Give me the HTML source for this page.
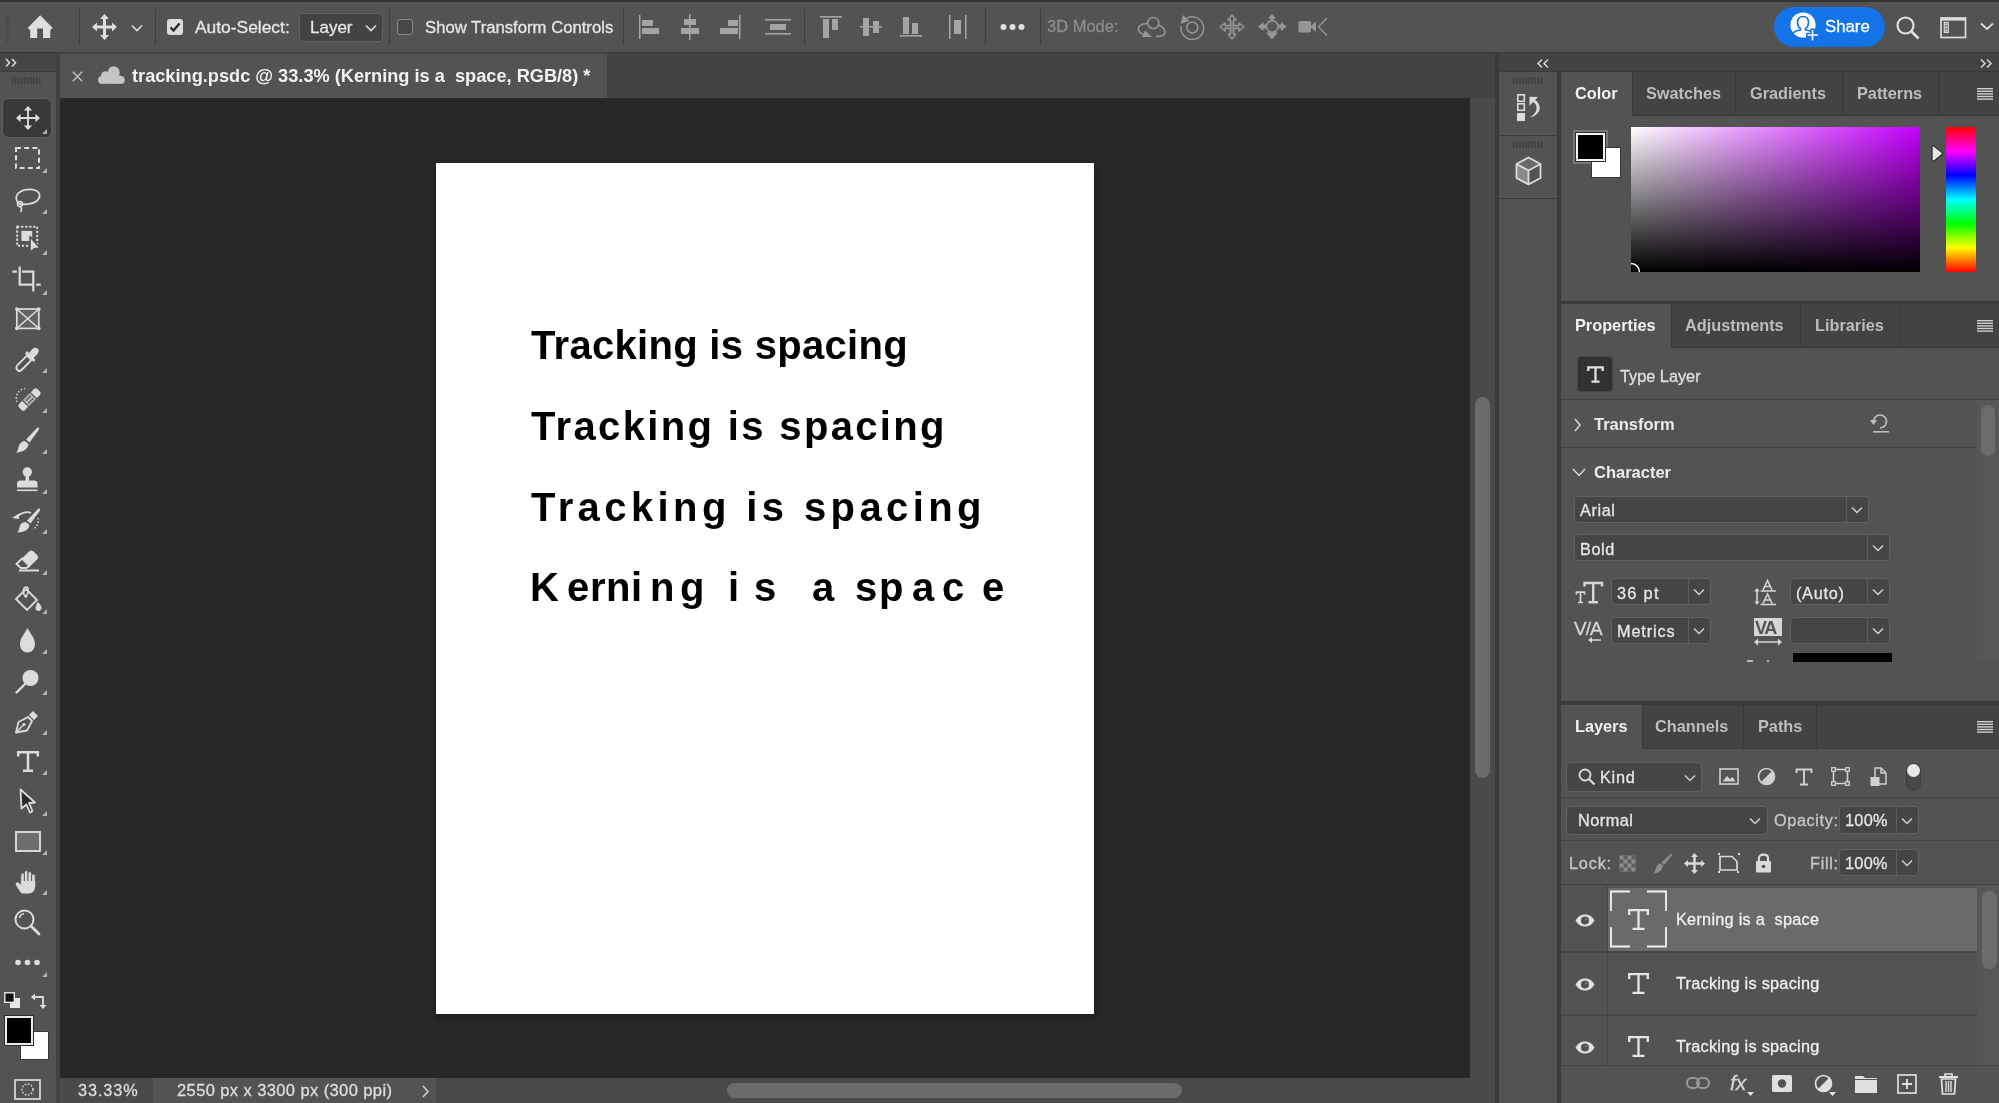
<!DOCTYPE html>
<html><head><meta charset="utf-8">
<style>
*{margin:0;padding:0;box-sizing:border-box}
html,body{width:1999px;height:1103px;overflow:hidden;background:#535353;font-family:"Liberation Sans",sans-serif;color:#e8e8e8}
.a{position:absolute}
.t{position:absolute;white-space:pre;line-height:1;will-change:transform}
.t{-webkit-text-stroke:0.3px}
.t[style*="font-weight:bold"]{-webkit-text-stroke:0}
#ct .t{-webkit-text-stroke:0}
.sep{position:absolute;width:1px;background:#3d3d3d}
.dd{position:absolute;background:#454545;border:1px solid #626262;border-radius:4px}
.ddsep{position:absolute;top:0;bottom:0;width:1px;background:#5a5a5a}
svg{position:absolute;overflow:visible}
</style></head><body>

<!-- TOP OPTIONS BAR -->
<div class="a" style="left:0;top:0;width:1999px;height:1.5px;background:#323232"></div>
<div class="a" style="left:0;top:2px;width:1999px;height:50px;background:#535353"></div>
<div class="a" style="left:0;top:52px;width:1999px;height:1px;background:#3a3a3a"></div>


<!-- TOPBAR CONTENT -->
<svg style="left:5.5px;top:12.5px" width="4" height="30"><g fill="#444"><rect x="0" y="0.0" width="3.2" height="1.3"/><rect x="0" y="3.1" width="3.2" height="1.3"/><rect x="0" y="6.2" width="3.2" height="1.3"/><rect x="0" y="9.3" width="3.2" height="1.3"/><rect x="0" y="12.4" width="3.2" height="1.3"/><rect x="0" y="15.5" width="3.2" height="1.3"/><rect x="0" y="18.6" width="3.2" height="1.3"/><rect x="0" y="21.7" width="3.2" height="1.3"/><rect x="0" y="24.8" width="3.2" height="1.3"/><rect x="0" y="27.9" width="3.2" height="1.3"/></g></svg>
<svg style="left:27px;top:15px" width="27" height="24" viewBox="0 0 27 24"><path d="M13.2 0.3 L25.8 13 L23.3 15 L23.3 23 L16 23 L16 13.5 L10.2 13.5 L10.2 23 L3.2 23 L3.2 15 L0.6 13 Z" fill="#dedede"/></svg>
<div class="sep" style="left:79px;top:9px;height:36px"></div>
<svg style="left:92px;top:14px" width="25" height="26" viewBox="0 0 25 26"><g fill="#dedede"><path d="M12.5 0 L17 5 L14 5 L14 11.5 L20 11.5 L20 8.5 L25 13 L20 17.5 L20 14.5 L14 14.5 L14 21 L17 21 L12.5 26 L8 21 L11 21 L11 14.5 L5 14.5 L5 17.5 L0 13 L5 8.5 L5 11.5 L11 11.5 L11 5 L8 5 Z"/></g></svg>
<svg style="left:131px;top:24px" width="12" height="8"><path d="M1 1.5 L6 6.5 L11 1.5" stroke="#dcdcdc" stroke-width="1.6" fill="none"/></svg>
<div class="sep" style="left:155px;top:9px;height:36px"></div>
<div class="a" style="left:167px;top:19px;width:16px;height:16px;background:#dcdcdc;border-radius:3px"></div>
<svg style="left:167px;top:19px" width="16" height="16"><path d="M3.5 8.5 L6.5 11.5 L12.5 4.5" stroke="#2a2a2a" stroke-width="2.4" fill="none"/></svg>
<div class="t" style="left:195px;top:19px;font-size:17.4px;color:#e6e6e6">Auto-Select:</div>
<div class="dd" style="left:299px;top:13px;width:84px;height:29px;background:#434343;border-color:#616161"></div>
<div class="t" style="left:310px;top:19px;font-size:17px;color:#e6e6e6">Layer</div>
<svg style="left:365px;top:24px" width="12" height="8"><path d="M1 1.5 L6 6.5 L11 1.5" stroke="#dcdcdc" stroke-width="1.6" fill="none"/></svg>
<div class="sep" style="left:389px;top:9px;height:36px"></div>
<div class="a" style="left:397px;top:19px;width:16px;height:16px;background:#474747;border:1.5px solid #8a8a8a;border-radius:3px"></div>
<div class="t" style="left:425px;top:20px;font-size:16.7px;color:#e6e6e6">Show Transform Controls</div>
<div class="sep" style="left:623px;top:9px;height:36px"></div>

<!-- align icons -->
<svg style="left:639px;top:15px" width="22" height="24"><g fill="#a4a4a4"><rect x="0" y="0" width="1.5" height="24"/><rect x="3" y="5" width="11" height="6"/><rect x="3" y="13" width="17" height="6"/></g></svg>
<svg style="left:681px;top:14px" width="20" height="26"><g fill="#a4a4a4"><rect x="8" y="0" width="1.5" height="26"/><rect x="3" y="5" width="12" height="6"/><rect x="0" y="14" width="18" height="6"/></g></svg>
<svg style="left:720px;top:15px" width="22" height="24"><g fill="#a4a4a4"><rect x="19" y="0" width="1.5" height="24"/><rect x="8" y="5" width="10" height="6"/><rect x="0" y="13" width="18" height="6"/></g></svg>
<svg style="left:765px;top:16px" width="26" height="22"><g fill="#a4a4a4"><rect x="0" y="3" width="26" height="1.6"/><rect x="5" y="8" width="16" height="6"/><rect x="0" y="17" width="26" height="1.6"/></g></svg>
<div class="sep" style="left:804px;top:9px;height:36px"></div>
<svg style="left:820px;top:16px" width="23" height="22"><g fill="#a4a4a4"><rect x="0" y="0" width="22" height="1.6"/><rect x="3" y="3" width="6" height="19"/><rect x="12" y="3" width="6" height="11"/></g></svg>
<svg style="left:860px;top:15px" width="23" height="24"><g fill="#a4a4a4"><rect x="0" y="11" width="22" height="1.6"/><rect x="3" y="3" width="6" height="18"/><rect x="13" y="6" width="6" height="12"/></g></svg>
<svg style="left:900px;top:16px" width="23" height="22"><g fill="#a4a4a4"><rect x="0" y="19" width="22" height="1.6"/><rect x="3" y="1" width="6" height="17"/><rect x="12" y="7" width="6" height="11"/></g></svg>
<svg style="left:949px;top:15px" width="19" height="24"><g fill="#a4a4a4"><rect x="0" y="0" width="1.5" height="24"/><rect x="5" y="5" width="7" height="14"/><rect x="16" y="0" width="1.5" height="24"/></g></svg>
<div class="sep" style="left:985px;top:9px;height:36px"></div>
<svg style="left:1000px;top:23px" width="26" height="8"><g fill="#e0e0e0"><circle cx="3.5" cy="4" r="3"/><circle cx="12.5" cy="4" r="3"/><circle cx="21.5" cy="4" r="3"/></g></svg>
<div class="sep" style="left:1040px;top:9px;height:36px"></div>
<div class="t" style="left:1047px;top:18px;font-size:16.5px;color:#8c8c8c">3D Mode:</div>
<!-- 3D icons -->
<svg style="left:1137px;top:16px" width="30" height="23" viewBox="0 0 30 23"><g fill="none" stroke="#969696" stroke-width="1.5"><circle cx="16.3" cy="7" r="5.6"/><path d="M10.8 7.5 C4 7.5 0.5 10.5 1.5 14 C2.5 17 6 18.5 9 19"/><path d="M21.2 9 C26 11 28.5 14 28 17 C27.5 19.5 24 20.5 19 20.5"/></g><path d="M5 21 L15 21 L8 14.5 Z" fill="#969696"/></svg>
<svg style="left:1179px;top:13px" width="27" height="28" viewBox="0 0 27 28"><g fill="none" stroke="#969696" stroke-width="1.5"><path d="M6 6.5 A11.3 11.3 0 1 1 2.2 13"/><circle cx="13.3" cy="14.5" r="5.5"/></g><path d="M1.5 11 L4 2 L10 8 Z" fill="#969696"/></svg>
<svg style="left:1219px;top:14px" width="26" height="26" viewBox="0 0 26 26"><path d="M13 1 L17 6 L14.5 6 L14.5 11.5 L20 11.5 L20 9 L25 13 L20 17 L20 14.5 L14.5 14.5 L14.5 20 L17 20 L13 25 L9 20 L11.5 20 L11.5 14.5 L6 14.5 L6 17 L1 13 L6 9 L6 11.5 L11.5 11.5 L11.5 6 L9 6 Z" fill="none" stroke="#969696" stroke-width="1.5" stroke-linejoin="round"/><path d="M13 6 V20 M6 13 H20" stroke="#969696" stroke-width="0.8"/></svg>
<svg style="left:1258px;top:14px" width="29" height="26" viewBox="0 0 29 26"><g fill="#969696"><path d="M14 0 L18 4.5 L15.5 4.5 L15.5 7.5 L12.5 7.5 L12.5 4.5 L10 4.5 Z"/><path d="M14 25.5 L20 18.5 L16.5 18.5 L16.5 16 L11.5 16 L11.5 18.5 L8 18.5 Z"/><path d="M0 12.5 L5.5 8 L5.5 10.5 L8 10.5 L8 14.5 L5.5 14.5 L5.5 17 Z"/><path d="M28.5 12.5 L23 8 L23 10.5 L20.5 10.5 L20.5 14.5 L23 14.5 L23 17 Z"/></g><circle cx="14.2" cy="12.5" r="5.8" fill="#575757" stroke="#969696" stroke-width="1.6"/></svg>
<svg style="left:1298px;top:17px" width="31" height="21" viewBox="0 0 31 21"><g fill="#969696"><rect x="0.5" y="4" width="12.5" height="11.5" rx="1.5"/><path d="M12 9.75 L18 4.5 L18 15 Z"/></g><path d="M29 1 L20.5 9.75 L29 18.5" fill="none" stroke="#969696" stroke-width="1.4"/></svg>
<!-- share -->
<div class="a" style="left:1774px;top:7px;width:111px;height:40px;background:#1473e6;border-radius:20px"></div>
<svg style="left:1789px;top:11px" width="32" height="31" viewBox="0 0 32 31"><circle cx="14" cy="14" r="12.6" fill="#fff"/><path d="M14 5.5 C18 5.5 19.5 8.5 19.5 11.5 C19.5 14.5 18 16.5 16.5 17.5 L16.5 19 C20 19.5 23.5 21 25 23" fill="none" stroke="#1473e6" stroke-width="1.6"/><path d="M14 5.5 C10 5.5 8.5 8.5 8.5 11.5 C8.5 14.5 10 16.5 11.5 17.5 L11.5 19 C8 19.5 4.5 21 3 23" fill="none" stroke="#1473e6" stroke-width="1.6"/><path d="M17 24 H30 M23.5 17.5 V30.5" stroke="#1473e6" stroke-width="4.5"/><path d="M18.5 24 H29 M23.5 19 V29.5" stroke="#fff" stroke-width="1.6"/></svg>
<div class="t" style="left:1825px;top:18.5px;font-size:16.8px;color:#fff">Share</div>
<svg style="left:1896px;top:16px" width="24" height="24" viewBox="0 0 24 24"><circle cx="9.5" cy="9.5" r="8" fill="none" stroke="#e0e0e0" stroke-width="2.2"/><path d="M15.5 15.5 L22.5 22.5" stroke="#e0e0e0" stroke-width="2.6"/></svg>
<svg style="left:1940px;top:17px" width="27" height="22" viewBox="0 0 27 22"><rect x="1" y="1" width="24.5" height="19.5" fill="none" stroke="#dcdcdc" stroke-width="1.7"/><rect x="1" y="1" width="24.5" height="2.6" fill="#dcdcdc"/><rect x="4.3" y="5.5" width="4" height="10" fill="none" stroke="#dcdcdc" stroke-width="1.2"/><g fill="#dcdcdc"><rect x="5.3" y="6.5" width="2" height="2"/><rect x="5.3" y="9.5" width="2" height="2"/><rect x="5.3" y="12.5" width="2" height="2"/></g></svg>
<svg style="left:1980px;top:22px" width="14" height="9"><path d="M1 1.5 L7 7 L13 1.5" stroke="#dcdcdc" stroke-width="1.8" fill="none"/></svg>

<!-- TAB ROW -->
<div class="a" style="left:56px;top:53px;width:1443px;height:45px;background:#434343"></div>
<div class="a" style="left:60px;top:54px;width:547px;height:44px;background:#535353"></div>


<!-- LEFT TOOLBAR -->
<div class="a" style="left:0;top:53px;width:56px;height:18px;background:#454545"></div>
<div class="a" style="left:0;top:71px;width:56px;height:1px;background:#3a3a3a"></div>
<div class="a" style="left:0;top:72px;width:56px;height:1031px;background:#535353"></div>
<div class="a" style="left:56px;top:53px;width:4px;height:1050px;background:#424242"></div>

<!-- CANVAS -->
<div class="a" style="left:60px;top:98px;width:1410px;height:980px;background:#282828"></div>
<div class="a" style="left:436px;top:163px;width:658px;height:851px;background:#fff;box-shadow:0 3px 6px rgba(0,0,0,.35)"></div>


<!-- CANVAS TEXT -->
<div class="a" id="ct" style="left:0;top:0;font-weight:bold;font-size:40px;color:#000">
<div class="t" id="l1" style="left:530.5px;top:325.3px;letter-spacing:0.3px">Tracking is spacing</div>
<div class="t" id="l2" style="left:530.5px;top:405.6px;letter-spacing:2.35px">Tracking is spacing</div>
<div class="t" id="l3" style="left:530.5px;top:486.5px;letter-spacing:4.4px">Tracking is spacing</div>
<div class="a" id="l4" style="left:0;top:566.5px"><span class="t" style="left:529.5px">K</span><span class="t" style="left:566.7px">e</span><span class="t" style="left:589.5px">r</span><span class="t" style="left:606.1px">n</span><span class="t" style="left:630.5px">i</span><span class="t" style="left:649.7px">n</span><span class="t" style="left:679.7px">g</span><span class="t" style="left:727.9px">i</span><span class="t" style="left:754.1px">s</span><span class="t" style="left:811.5px">a</span><span class="t" style="left:855.3px">s</span><span class="t" style="left:878.5px">p</span><span class="t" style="left:911.9px">a</span><span class="t" style="left:942.3px">c</span><span class="t" style="left:981.6px">e</span></div>
</div>

<!-- V SCROLL -->
<div class="a" style="left:1470px;top:98px;width:25px;height:980px;background:#4a4a4a"></div>
<div class="a" style="left:1475px;top:397px;width:15px;height:381px;background:#6b6b6b;border-radius:8px"></div>

<!-- STATUS BAR -->
<div class="a" style="left:60px;top:1078px;width:1435px;height:25px;background:#4a4a4a"></div>
<div class="a" style="left:153px;top:1078px;width:283px;height:25px;background:#535353"></div>
<div class="a" style="left:727px;top:1083px;width:455px;height:15px;background:#6b6b6b;border-radius:8px"></div>

<!-- RIGHT DOCK -->
<div class="a" style="left:1495px;top:53px;width:4px;height:1050px;background:#3b3b3b"></div>
<div class="a" style="left:1499px;top:53px;width:500px;height:18px;background:#434343"></div>
<div class="a" style="left:1499px;top:71px;width:500px;height:1px;background:#3a3a3a"></div>
<div class="a" style="left:1499px;top:72px;width:58px;height:1031px;background:#535353"></div>
<div class="a" style="left:1557px;top:72px;width:4px;height:1031px;background:#3b3b3b"></div>
<div class="a" style="left:1561px;top:72px;width:438px;height:1031px;background:#535353"></div>

<!-- TAB CONTENT -->
<svg style="left:5px;top:58px" width="13" height="10"><path d="M1 1 L4.5 4.75 L1 8.5 M7 1 L10.5 4.75 L7 8.5" stroke="#d8d8d8" stroke-width="1.6" fill="none"/></svg>
<svg style="left:12px;top:77px" width="32" height="7"><g fill="#3f3f3f"><rect x="0" y="0" width="1.5" height="7"/><rect x="3" y="0" width="1.5" height="7"/><rect x="6" y="0" width="1.5" height="7"/><rect x="9" y="0" width="1.5" height="7"/><rect x="12" y="0" width="1.5" height="7"/><rect x="15" y="0" width="1.5" height="7"/><rect x="18" y="0" width="1.5" height="7"/><rect x="21" y="0" width="1.5" height="7"/><rect x="24" y="0" width="1.5" height="7"/><rect x="27" y="0" width="1.5" height="7"/></g></svg>
<svg style="left:72px;top:70.5px" width="11" height="11"><path d="M0.8 0.8 L10.2 10.2 M10.2 0.8 L0.8 10.2" stroke="#c6c6c6" stroke-width="1.3"/></svg>
<svg style="left:98px;top:66px" width="27" height="18" viewBox="0 0 27 18"><g fill="#c4c4c4"><circle cx="15.7" cy="6.2" r="6"/><circle cx="7.4" cy="9.6" r="4.4"/><circle cx="4" cy="13.9" r="3.9"/><circle cx="22.8" cy="13.9" r="3.9"/><rect x="4" y="9.5" width="18.8" height="8.3"/></g></svg>
<div class="t" style="left:132px;top:67px;font-size:18.2px;font-weight:bold;color:#f2f2f2">tracking.psdc @ 33.3% (Kerning is a  space, RGB/8) *</div>



<!-- TOOL ICONS -->
<div class="a" style="left:3px;top:99px;width:48px;height:38px;background:#393939;box-shadow:0 0 0 1px #5f5f5f;border-radius:5px"></div>
<svg style="left:15.5px;top:106px" width="24" height="24" viewBox="0 0 26 26"><path d="M13 0 L17.5 5 L14 5 L14 12 L21 12 L21 8.5 L26 13 L21 17.5 L21 14 L14 14 L14 21 L17.5 21 L13 26 L8.5 21 L12 21 L12 14 L5 14 L5 17.5 L0 13 L5 8.5 L5 12 L12 12 L12 5 L8.5 5 Z" fill="#dcdcdc"/></svg>
<svg style="left:42px;top:129px" width="5" height="5"><path d="M5 0 L5 5 L0 5 Z" fill="#b4b4b4"/></svg>
<svg style="left:15px;top:147px" width="25" height="22" viewBox="0 0 25 22"><rect x="1" y="1" width="23" height="20" fill="none" stroke="#dcdcdc" stroke-width="2" stroke-dasharray="5 3.2"/></svg>
<svg style="left:42px;top:168px" width="5" height="5"><path d="M5 0 L5 5 L0 5 Z" fill="#b4b4b4"/></svg>
<svg style="left:14px;top:187px" width="27" height="26" viewBox="0 0 27 26"><path d="M6 17 C1 14 1 8 6 5 C11 1.5 21 1.5 24.5 5.5 C27.5 9.5 24 15 17 16.5 C13 17.5 9 17.5 6 17 Z" fill="none" stroke="#dcdcdc" stroke-width="1.8"/><circle cx="6" cy="17" r="2.5" fill="none" stroke="#dcdcdc" stroke-width="1.6"/><path d="M6 19.5 C8 21 8 23 6.5 25" fill="none" stroke="#dcdcdc" stroke-width="1.6"/></svg>
<svg style="left:42px;top:209px" width="5" height="5"><path d="M5 0 L5 5 L0 5 Z" fill="#b4b4b4"/></svg>
<svg style="left:15px;top:224px" width="27" height="30" viewBox="0 0 27 30"><rect x="2.2" y="2.7" width="20" height="19" fill="none" stroke="#dcdcdc" stroke-width="2" stroke-dasharray="2.2 1.8"/><rect x="6.4" y="6.9" width="10.8" height="10.1" fill="#dcdcdc"/><path d="M15 12.5 L25.3 24.4 L19.5 24.5 L15 28.5 Z" fill="#dcdcdc" stroke="#535353" stroke-width="1.6" stroke-linejoin="round"/></svg>
<svg style="left:42px;top:250px" width="5" height="5"><path d="M5 0 L5 5 L0 5 Z" fill="#b4b4b4"/></svg>
<svg style="left:12px;top:265px" width="30" height="28" viewBox="0 0 30 28"><path d="M7.7 1.5 V19.7 H22 M21.3 26.5 V6.7 H10 M0.4 6.7 H4.9 M24.2 19.7 H28.7" fill="none" stroke="#dcdcdc" stroke-width="2.2"/></svg>
<svg style="left:42px;top:290px" width="5" height="5"><path d="M5 0 L5 5 L0 5 Z" fill="#b4b4b4"/></svg>
<svg style="left:15px;top:307px" width="26" height="23" viewBox="0 0 26 23"><rect x="1.8" y="2" width="22" height="19.4" fill="#626262" stroke="#dcdcdc" stroke-width="1.7"/><path d="M1.8 2 L23.8 21.4 M23.8 2 L1.8 21.4" stroke="#dcdcdc" stroke-width="1.5"/><g fill="#dcdcdc"><circle cx="1.8" cy="2" r="1.8"/><circle cx="23.8" cy="2" r="1.8"/><circle cx="1.8" cy="21.4" r="1.8"/><circle cx="23.8" cy="21.4" r="1.8"/></g></svg>
<svg style="left:15px;top:347px" width="25" height="25" viewBox="0 0 25 25"><path d="M3 23.5 C1 22 1 20 2.5 18 L12 8.5 L16.5 13 L7 22.5 C5.5 24 4 24.5 3 23.5 Z" fill="none" stroke="#dcdcdc" stroke-width="1.9"/><path d="M10 6.5 L18.5 15 L20.5 13 L18.5 11 L22 7.5 C24.5 5 24 2 22.5 1.5 C21 0 18.5 0.5 17 2.5 L14 6 L12 4 Z" fill="#dcdcdc"/></svg>
<svg style="left:42px;top:368px" width="5" height="5"><path d="M5 0 L5 5 L0 5 Z" fill="#b4b4b4"/></svg>
<svg style="left:14px;top:385px" width="28" height="27" viewBox="0 0 28 27"><g transform="rotate(-45 15.5 14.5)"><rect x="2.5" y="10.3" width="26" height="8.4" rx="2.4" fill="#dcdcdc"/><path d="M9.9 10 V19 M21.1 10 V19" stroke="#535353" stroke-width="1.2"/><rect x="11" y="11.2" width="9" height="6.6" fill="none" stroke="#535353" stroke-width="0.6"/><circle cx="13.0" cy="12.9" r="1.1" fill="#535353"/><circle cx="13.0" cy="16.1" r="1.1" fill="#535353"/><circle cx="15.5" cy="12.9" r="1.1" fill="#535353"/><circle cx="15.5" cy="16.1" r="1.1" fill="#535353"/><circle cx="18.0" cy="12.9" r="1.1" fill="#535353"/><circle cx="18.0" cy="16.1" r="1.1" fill="#535353"/></g><path d="M3 17 C1 12 3.5 5 11 3.5" fill="none" stroke="#dcdcdc" stroke-width="1.5" stroke-dasharray="1.5 1.9"/></svg>
<svg style="left:42px;top:408px" width="5" height="5"><path d="M5 0 L5 5 L0 5 Z" fill="#b4b4b4"/></svg>
<svg style="left:15px;top:427px" width="25" height="26" viewBox="0 0 25 26"><path d="M23.5 0.5 C24.5 1 24 2.5 23 4 L14.5 15.5 L11 12.5 L21.5 1.5 C22.5 0.5 23 0.3 23.5 0.5 Z" fill="#dcdcdc"/><path d="M10 14 L13.5 17 C13 21 10 25 1 25.5 C3.5 23.5 3 21 4 18.5 C5 16 7.5 14 10 14 Z" fill="#dcdcdc"/></svg>
<svg style="left:42px;top:449px" width="5" height="5"><path d="M5 0 L5 5 L0 5 Z" fill="#b4b4b4"/></svg>
<svg style="left:15px;top:467px" width="25" height="25" viewBox="0 0 25 25"><circle cx="12.3" cy="5" r="4.7" fill="#dcdcdc"/><rect x="10.5" y="8" width="3.6" height="6" fill="#dcdcdc"/><path d="M2 20.5 V17 C2 15 3 13.5 5.5 13.5 H19 C21.5 13.5 22.5 15 22.5 17 V20.5 Z" fill="#dcdcdc"/><rect x="2" y="22.5" width="20.5" height="1.6" fill="#dcdcdc"/></svg>
<svg style="left:42px;top:489px" width="5" height="5"><path d="M5 0 L5 5 L0 5 Z" fill="#b4b4b4"/></svg>
<svg style="left:12px;top:508px" width="29" height="25" viewBox="0 0 29 25"><path d="M27.5 0.5 C28.5 1 28 2.5 27 4 L18.5 15.5 L15 12.5 L25.5 1.5 C26.5 0.5 27 0.3 27.5 0.5 Z" fill="#dcdcdc"/><path d="M14 14 L17.5 17 C17 21 14 24 5 24.5 C7.5 22.5 7 20 8 17.5 C9 15 11.5 14 14 14 Z" fill="#dcdcdc"/><path d="M0 10 L7 5.5 L7 11 Z" fill="#dcdcdc"/><path d="M5 8.5 C9 5 15 3 19 5" fill="none" stroke="#dcdcdc" stroke-width="1.8"/><path d="M26 10 C27 15 25 19 21 21.5" fill="none" stroke="#dcdcdc" stroke-width="1.4" stroke-dasharray="1.5 1.8"/></svg>
<svg style="left:42px;top:529px" width="5" height="5"><path d="M5 0 L5 5 L0 5 Z" fill="#b4b4b4"/></svg>
<svg style="left:15px;top:549px" width="25" height="23" viewBox="0 0 25 23"><path d="M1.5 15 L14 2.5 C15.5 1 17 1 18.5 2.5 L22 6 C23.5 7.5 23.5 9 22 10.5 L13.5 19 H7 Z" fill="#dcdcdc"/><path d="M1.5 15 L7 9.5 L14 16.5 L11.5 19 H6 Z" fill="#535353" stroke="#dcdcdc" stroke-width="1.8"/><rect x="4" y="20.5" width="20" height="2" fill="#dcdcdc"/></svg>
<svg style="left:42px;top:570px" width="5" height="5"><path d="M5 0 L5 5 L0 5 Z" fill="#b4b4b4"/></svg>
<svg style="left:14px;top:586px" width="28" height="27" viewBox="0 0 28 27"><path d="M2 13 L12 3 L23 14 L13 24 Z" fill="none" stroke="#dcdcdc" stroke-width="1.9"/><path d="M12 11 C8 8 9 1 12 1 C15 1 14.5 5 13 9" fill="none" stroke="#dcdcdc" stroke-width="1.6"/><circle cx="12" cy="10" r="1.6" fill="#dcdcdc"/><path d="M24 16 C22 19 21.5 21 21.5 22 C21.5 24 23 25 24.5 25 C26 25 27.5 24 27.5 22 C27.5 21 27 19 24 16 Z" fill="#dcdcdc"/></svg>
<svg style="left:42px;top:609px" width="5" height="5"><path d="M5 0 L5 5 L0 5 Z" fill="#b4b4b4"/></svg>
<svg style="left:19px;top:628px" width="17" height="25" viewBox="0 0 17 25"><path d="M8.5 0 C6 5 1 10 1 16 C1 21 4.5 24.5 8.5 24.5 C12.5 24.5 16 21 16 16 C16 10 11 5 8.5 0 Z" fill="#dcdcdc"/></svg>
<svg style="left:42px;top:649px" width="5" height="5"><path d="M5 0 L5 5 L0 5 Z" fill="#b4b4b4"/></svg>
<svg style="left:15px;top:669px" width="25" height="25" viewBox="0 0 25 25"><circle cx="15.5" cy="9" r="8" fill="#dcdcdc"/><path d="M10 15 L1.5 23.5" stroke="#dcdcdc" stroke-width="2.4" stroke-linecap="round"/></svg>
<svg style="left:42px;top:690px" width="5" height="5"><path d="M5 0 L5 5 L0 5 Z" fill="#b4b4b4"/></svg>
<svg style="left:15px;top:709px" width="25" height="25" viewBox="0 0 25 25"><path d="M1 23.5 L3.5 13 L13 8 L17 12 L12 21.5 Z" fill="none" stroke="#dcdcdc" stroke-width="1.8" stroke-linejoin="round"/><path d="M1 23.5 L8.5 16" stroke="#dcdcdc" stroke-width="1.5"/><circle cx="9" cy="15.5" r="1.6" fill="#dcdcdc"/><path d="M14 6 L18 2 L23 7 L19 11 Z" fill="#dcdcdc"/></svg>
<svg style="left:42px;top:730px" width="5" height="5"><path d="M5 0 L5 5 L0 5 Z" fill="#b4b4b4"/></svg>
<svg style="left:17px;top:751px" width="22" height="21" viewBox="0 0 22 21"><path d="M1.2 5.5 V1.2 H20.8 V5.5 M11 1.2 V19.5 M6 19.8 H16" fill="none" stroke="#dcdcdc" stroke-width="2.5"/></svg>
<svg style="left:42px;top:770px" width="5" height="5"><path d="M5 0 L5 5 L0 5 Z" fill="#b4b4b4"/></svg>
<svg style="left:19px;top:788px" width="18" height="26" viewBox="0 0 18 26"><path d="M1.5 1.5 L16 14.5 L10 15 L13.5 23 L11 24.5 L7.5 16.5 L2.5 20.5 Z" fill="#2a2a2a" stroke="#dcdcdc" stroke-width="1.8" stroke-linejoin="round"/></svg>
<svg style="left:42px;top:811px" width="5" height="5"><path d="M5 0 L5 5 L0 5 Z" fill="#b4b4b4"/></svg>
<svg style="left:15px;top:831px" width="26" height="21" viewBox="0 0 26 21"><rect x="1" y="1" width="24" height="19" fill="#6e6e6e" stroke="#dcdcdc" stroke-width="1.9"/></svg>
<svg style="left:42px;top:850px" width="5" height="5"><path d="M5 0 L5 5 L0 5 Z" fill="#b4b4b4"/></svg>
<svg style="left:15px;top:869px" width="25" height="25" viewBox="0 0 25 25"><g fill="#dcdcdc" stroke="#535353" stroke-width="0.9"><path d="M7 24.5 C4.5 22 1.5 18 0.5 15.5 C0 14 1.5 12.5 3 13.5 L6 16 L6 14 Z"/><rect x="5.8" y="4" width="3.6" height="14" rx="1.8"/><rect x="9.4" y="1.5" width="3.6" height="16" rx="1.8"/><rect x="13" y="2.5" width="3.6" height="15" rx="1.8"/><rect x="16.6" y="5" width="3.6" height="13" rx="1.8"/></g><path d="M5.8 12 H20.2 V17 C20.2 21.5 17.5 24.5 13.5 24.5 H7.5 C6.5 24.5 5.8 23 5.8 21 Z" fill="#dcdcdc"/><path d="M1.2 14 C0.5 14.5 1 16 2 17.5 C3.5 20 5 22.5 7 24.5 L8 19 L6 16 L3 13.5 C2.3 13.2 1.7 13.5 1.2 14 Z" fill="#dcdcdc"/></svg>
<svg style="left:42px;top:890px" width="5" height="5"><path d="M5 0 L5 5 L0 5 Z" fill="#b4b4b4"/></svg>
<svg style="left:14px;top:909px" width="27" height="27" viewBox="0 0 27 27"><circle cx="10.5" cy="10.5" r="9" fill="none" stroke="#dcdcdc" stroke-width="2"/><path d="M5.5 9 C6 6.5 7.5 5 10 4.8" fill="none" stroke="#dcdcdc" stroke-width="1.5"/><path d="M17 17 L25 25" stroke="#dcdcdc" stroke-width="2.8" stroke-linecap="round"/></svg>
<svg style="left:15px;top:958px" width="25" height="9"><g fill="#dcdcdc"><circle cx="3" cy="4.5" r="2.8"/><circle cx="12.5" cy="4.5" r="2.8"/><circle cx="22" cy="4.5" r="2.8"/></g></svg>
<svg style="left:42px;top:972px" width="5" height="5"><path d="M5 0 L5 5 L0 5 Z" fill="#b4b4b4"/></svg>
<svg style="left:4px;top:992px" width="17" height="17"><rect x="6" y="6" width="10" height="10" fill="#e8e8e8"/><rect x="0.8" y="0.8" width="9.5" height="9.5" fill="#111" stroke="#e8e8e8" stroke-width="1.4"/></svg>
<svg style="left:31px;top:992px" width="17" height="17" viewBox="0 0 17 17"><path d="M2 5 H12 V14" fill="none" stroke="#dcdcdc" stroke-width="1.8"/><path d="M0 5 L4 1.5 V8.5 Z M12 17 L8.5 13 H15.5 Z" fill="#dcdcdc"/></svg>
<div class="a" style="left:20px;top:1031px;width:29px;height:29px;background:#fff;border:1px solid #3a3a3a"></div>
<div class="a" style="left:4.5px;top:1016px;width:28.5px;height:28.5px;background:#000;border:2px solid #eaeaea;box-shadow:0 0 0 1px #2c2c2c"></div>
<svg style="left:14px;top:1079px" width="27" height="21" viewBox="0 0 27 21"><rect x="1" y="1" width="25" height="19" fill="none" stroke="#dcdcdc" stroke-width="1.7"/><circle cx="13.5" cy="10.5" r="5.5" fill="none" stroke="#dcdcdc" stroke-width="1.5" stroke-dasharray="1.6 1.6"/></svg>
<!-- RIGHT PANELS -->
<svg style="left:1537px;top:59px" width="12" height="9"><path d="M5 0.5 L1 4.5 L5 8.5 M11 0.5 L7 4.5 L11 8.5" stroke="#d8d8d8" stroke-width="1.5" fill="none"/></svg>
<svg style="left:1980px;top:59px" width="12" height="9"><path d="M1 0.5 L5 4.5 L1 8.5 M7 0.5 L11 4.5 L7 8.5" stroke="#d8d8d8" stroke-width="1.5" fill="none"/></svg>
<div class="a" style="left:1499px;top:135px;width:58px;height:1px;background:#3b3b3b"></div>
<div class="a" style="left:1499px;top:198px;width:58px;height:1px;background:#3b3b3b"></div>
<div class="a" style="left:1499px;top:199px;width:58px;height:904px;background:#525252"></div>
<svg style="left:1513px;top:77px" width="32" height="7"><g fill="#3f3f3f"><rect x="0.0" y="0" width="1.5" height="7"/><rect x="3.1" y="0" width="1.5" height="7"/><rect x="6.2" y="0" width="1.5" height="7"/><rect x="9.3" y="0" width="1.5" height="7"/><rect x="12.4" y="0" width="1.5" height="7"/><rect x="15.5" y="0" width="1.5" height="7"/><rect x="18.6" y="0" width="1.5" height="7"/><rect x="21.7" y="0" width="1.5" height="7"/><rect x="24.8" y="0" width="1.5" height="7"/><rect x="27.900000000000002" y="0" width="1.5" height="7"/></g></svg>
<svg style="left:1513px;top:141px" width="32" height="7"><g fill="#3f3f3f"><rect x="0.0" y="0" width="1.5" height="7"/><rect x="3.1" y="0" width="1.5" height="7"/><rect x="6.2" y="0" width="1.5" height="7"/><rect x="9.3" y="0" width="1.5" height="7"/><rect x="12.4" y="0" width="1.5" height="7"/><rect x="15.5" y="0" width="1.5" height="7"/><rect x="18.6" y="0" width="1.5" height="7"/><rect x="21.7" y="0" width="1.5" height="7"/><rect x="24.8" y="0" width="1.5" height="7"/><rect x="27.900000000000002" y="0" width="1.5" height="7"/></g></svg>
<svg style="left:1516px;top:94px" width="26" height="28" viewBox="0 0 26 28"><g fill="none" stroke="#dcdcdc" stroke-width="1.6"><rect x="1.8" y="0.8" width="6.5" height="6.5"/><rect x="1.8" y="9.8" width="6.5" height="6.5"/></g><rect x="1" y="19" width="8" height="8" fill="#dcdcdc"/><path d="M17 5 C22 7 24 11 23.7 14.5 C23.3 19 19 22.5 14 23.6 C18 21 20.6 17.5 20.6 14 C20.6 10.5 19 8.5 15.5 7.5 Z" fill="#dcdcdc"/><path d="M13.5 2.8 L22 3 L13.5 11.8 Z" fill="#dcdcdc"/></svg>
<svg style="left:1515px;top:156px" width="27" height="30" viewBox="0 0 27 30"><path d="M13.5 1.5 L25.5 8 L13.5 14.5 L1.5 8 Z" fill="#6a6a6a"/><path d="M1.5 8 L13.5 14.5 L13.5 28.5 L1.5 22 Z" fill="#8a8a8a"/><path d="M13.5 1.5 L25.5 8 V22 L13.5 28.5 L1.5 22 V8 Z M1.5 8 L13.5 14.5 L25.5 8 M13.5 14.5 V28.5" fill="none" stroke="#dcdcdc" stroke-width="1.8" stroke-linejoin="round"/></svg>
<div class="a" style="left:1561px;top:72px;width:438px;height:44px;background:#434343"></div><div class="a" style="left:1561px;top:72px;width:71px;height:44px;background:#535353"></div><div class="t" style="left:1575px;top:85px;font-size:16.3px;font-weight:bold;color:#f2f2f2">Color</div><div class="t" style="left:1646px;top:85px;font-size:16.3px;font-weight:bold;color:#bdbdbd">Swatches</div><div class="t" style="left:1750px;top:85px;font-size:16.3px;font-weight:bold;color:#bdbdbd">Gradients</div><div class="t" style="left:1857px;top:85px;font-size:16.3px;font-weight:bold;color:#bdbdbd">Patterns</div><div class="a" style="left:1632px;top:72px;width:1px;height:44px;background:#383838"></div><div class="a" style="left:1735px;top:72px;width:1px;height:44px;background:#383838"></div><div class="a" style="left:1842px;top:72px;width:1px;height:44px;background:#383838"></div><div class="a" style="left:1938px;top:72px;width:1px;height:44px;background:#383838"></div><div class="a" style="left:1632px;top:115px;width:367px;height:1px;background:#3b3b3b"></div><svg style="left:1977px;top:88px" width="16" height="12"><g fill="#cfcfcf"><rect x="0" y="0" width="16" height="1.4"/><rect x="0" y="2.6" width="16" height="1.4"/><rect x="0" y="5.2" width="16" height="1.4"/><rect x="0" y="7.8" width="16" height="1.4"/><rect x="0" y="10.4" width="16" height="1.4"/></g></svg>
<div class="a" style="left:1573px;top:130px;width:35px;height:34px;background:#777"></div>
<div class="a" style="left:1591px;top:147px;width:30px;height:31px;background:#fff;border:1px solid #363636"></div>
<div class="a" style="left:1575px;top:132px;width:31px;height:30px;background:#2e2e2e"></div>
<div class="a" style="left:1576px;top:133px;width:29px;height:28px;background:#f4f4f4"></div>
<div class="a" style="left:1578px;top:135px;width:25px;height:24px;background:#000"></div>
<div class="a" style="left:1631px;top:127px;width:289px;height:145px;background:linear-gradient(to bottom,rgba(0,0,0,0),#000),linear-gradient(to right,#fff,#c400ff)"></div>
<svg style="left:1631px;top:262px;overflow:hidden" width="12" height="10"><circle cx="0" cy="10" r="8.5" fill="none" stroke="#fff" stroke-width="1.5"/></svg>
<div class="a" style="left:1946px;top:127px;width:30px;height:145px;background:linear-gradient(to bottom,#f00 0%,#f0f 16.7%,#00f 33.3%,#0ff 50%,#0f0 66.7%,#ff0 83.3%,#f00 100%)"></div>
<svg style="left:1929px;top:145px" width="15" height="17" viewBox="0 0 15 17"><path d="M3 2 C3 1 4 0.5 5 1 L13 7.5 C14 8.2 14 8.8 13 9.5 L5 16 C4 16.5 3 16 3 15 Z" fill="#e6e6e6" stroke="#2c2c2c" stroke-width="1.3"/></svg>
<div class="a" style="left:1561px;top:301px;width:438px;height:3px;background:#3b3b3b"></div>
<div class="a" style="left:1561px;top:304px;width:438px;height:44px;background:#434343"></div><div class="a" style="left:1561px;top:304px;width:110px;height:44px;background:#535353"></div><div class="t" style="left:1575px;top:317px;font-size:16.3px;font-weight:bold;color:#f2f2f2">Properties</div><div class="t" style="left:1685px;top:317px;font-size:16.3px;font-weight:bold;color:#bdbdbd">Adjustments</div><div class="t" style="left:1815px;top:317px;font-size:16.3px;font-weight:bold;color:#bdbdbd">Libraries</div><div class="a" style="left:1671px;top:304px;width:1px;height:44px;background:#383838"></div><div class="a" style="left:1800px;top:304px;width:1px;height:44px;background:#383838"></div><div class="a" style="left:1899px;top:304px;width:1px;height:44px;background:#383838"></div><div class="a" style="left:1671px;top:347px;width:328px;height:1px;background:#3b3b3b"></div><svg style="left:1977px;top:320px" width="16" height="12"><g fill="#cfcfcf"><rect x="0" y="0" width="16" height="1.4"/><rect x="0" y="2.6" width="16" height="1.4"/><rect x="0" y="5.2" width="16" height="1.4"/><rect x="0" y="7.8" width="16" height="1.4"/><rect x="0" y="10.4" width="16" height="1.4"/></g></svg>
<div class="a" style="left:1577px;top:356px;width:36px;height:36px;background:#323232;border:1px solid #464646;border-radius:4px"></div>
<svg style="left:1587px;top:366px" width="17" height="17" viewBox="0 0 17 17"><path d="M1.3 5 V1.3 H15.7 V5 M8.5 1.3 V15.7 M4.5 15.7 H12.5" fill="none" stroke="#e0e0e0" stroke-width="2.3"/></svg>
<div class="t" style="left:1620px;top:368px;font-size:16.3px;color:#e0e0e0">Type Layer</div>
<div class="a" style="left:1561px;top:399px;width:438px;height:1px;background:#414141"></div>
<div class="a" style="left:1977px;top:400px;width:22px;height:262px;background:#575757"></div>
<div class="a" style="left:1981px;top:405px;width:14px;height:51px;background:#6c6c6c;border-radius:7px"></div>
<svg style="left:1574px;top:418px" width="7" height="14"><path d="M1 1 L6 7 L1 13" stroke="#d8d8d8" stroke-width="1.5" fill="none"/></svg>
<div class="t" style="left:1594px;top:416px;font-size:16.5px;font-weight:bold;color:#ececec">Transform</div>
<svg style="left:1869px;top:412px" width="22" height="21" viewBox="0 0 22 21"><path d="M4.5 9.5 A6.5 6.5 0 1 1 11 16" fill="none" stroke="#bdbdbd" stroke-width="1.7"/><path d="M0.8 8 L8.2 8 L4.5 13 Z" fill="#bdbdbd"/><rect x="4" y="19" width="16" height="1.6" fill="#bdbdbd"/></svg>
<div class="a" style="left:1561px;top:447px;width:416px;height:1px;background:#414141"></div>
<svg style="left:1572px;top:468px" width="14" height="9"><path d="M1 1 L7 7.5 L13 1" stroke="#d8d8d8" stroke-width="1.5" fill="none"/></svg>
<div class="t" style="left:1594px;top:464px;font-size:16.5px;font-weight:bold;color:#ececec">Character</div>
<div class="dd" style="left:1574px;top:496px;width:295px;height:27px"></div><div class="a" style="left:1846px;top:497px;width:1px;height:25px;background:#5c5c5c"></div><div class="t" style="left:1580px;top:502px;font-size:16.3px;color:#e6e6e6;letter-spacing:0.6px">Arial</div><svg style="left:1851px;top:506px" width="12" height="8"><path d="M1 1.5 L6.0 6.5 L11 1.5" stroke="#d0d0d0" stroke-width="1.5" fill="none"/></svg>
<div class="dd" style="left:1574px;top:534px;width:316px;height:27px"></div><div class="a" style="left:1867px;top:535px;width:1px;height:25px;background:#5c5c5c"></div><div class="t" style="left:1580px;top:541px;font-size:16.3px;color:#e6e6e6;letter-spacing:0.6px">Bold</div><svg style="left:1872px;top:544px" width="12" height="8"><path d="M1 1.5 L6.0 6.5 L11 1.5" stroke="#d0d0d0" stroke-width="1.5" fill="none"/></svg>
<div class="dd" style="left:1611px;top:578px;width:100px;height:27px"></div><div class="a" style="left:1688px;top:579px;width:1px;height:25px;background:#5c5c5c"></div><div class="t" style="left:1617px;top:585px;font-size:16.3px;color:#e6e6e6;letter-spacing:1.3px">36 pt</div><svg style="left:1693px;top:588px" width="12" height="8"><path d="M1 1.5 L6.0 6.5 L11 1.5" stroke="#d0d0d0" stroke-width="1.5" fill="none"/></svg>
<div class="dd" style="left:1790px;top:578px;width:100px;height:27px"></div><div class="a" style="left:1867px;top:579px;width:1px;height:25px;background:#5c5c5c"></div><div class="t" style="left:1796px;top:585px;font-size:16.3px;color:#e6e6e6;letter-spacing:0.7px">(Auto)</div><svg style="left:1872px;top:588px" width="12" height="8"><path d="M1 1.5 L6.0 6.5 L11 1.5" stroke="#d0d0d0" stroke-width="1.5" fill="none"/></svg>
<div class="dd" style="left:1611px;top:617px;width:100px;height:27px"></div><div class="a" style="left:1688px;top:618px;width:1px;height:25px;background:#5c5c5c"></div><div class="t" style="left:1617px;top:623px;font-size:16.3px;color:#e6e6e6;letter-spacing:0.85px">Metrics</div><svg style="left:1693px;top:627px" width="12" height="8"><path d="M1 1.5 L6.0 6.5 L11 1.5" stroke="#d0d0d0" stroke-width="1.5" fill="none"/></svg>
<div class="dd" style="left:1790px;top:617px;width:100px;height:27px"></div><div class="a" style="left:1867px;top:618px;width:1px;height:25px;background:#5c5c5c"></div><svg style="left:1872px;top:627px" width="12" height="8"><path d="M1 1.5 L6.0 6.5 L11 1.5" stroke="#d0d0d0" stroke-width="1.5" fill="none"/></svg>
<div class="a" style="left:1793px;top:653px;width:99px;height:9px;background:#000"></div>
<div class="a" style="left:1747px;top:660px;width:6px;height:2px;background:#bbb"></div><div class="a" style="left:1767px;top:660px;width:2px;height:2px;background:#bbb"></div>
<svg style="left:1575px;top:581px" width="29" height="24" viewBox="0 0 29 24"><path d="M9.5 5.5 V2 H27 V5.5 M18.2 2 V21 M13.5 21.2 H23" fill="none" stroke="#d6d6d6" stroke-width="2.4"/><path d="M1.5 13.5 V11.2 H9.5 V13.5 M5.5 11.2 V21.3 M3 21.5 H8" fill="none" stroke="#d6d6d6" stroke-width="1.7"/></svg>
<svg style="left:1754px;top:579px" width="26" height="27" viewBox="0 0 26 27"><g fill="none" stroke="#d6d6d6" stroke-width="1.6"><path d="M9 11 L13.5 1.5 L18 11 M10.5 7.5 H16.5 M6.5 12 H22"/><path d="M9 24.5 L13.5 15 L18 24.5 M10.5 21 H16.5 M6.5 25.5 H22"/><path d="M3 11 V24"/></g><path d="M0.3 12.5 L3 9 L5.7 12.5 Z M0.3 22.5 L3 26 L5.7 22.5 Z" fill="#d6d6d6"/></svg>
<div class="t" style="left:1574px;top:619px;font-size:19px;color:#d6d6d6;letter-spacing:-1px">V/A</div>
<svg style="left:1588px;top:636px" width="14" height="8"><path d="M13 4 H2" stroke="#d6d6d6" stroke-width="1.5"/><path d="M0 4 L4 1 V7 Z" fill="#d6d6d6"/></svg>
<div class="a" style="left:1754px;top:618px;width:28px;height:18px;background:#d6d6d6"></div>
<div class="t" style="left:1755px;top:619px;font-size:18px;font-weight:bold;color:#535353;letter-spacing:-1.5px">VA</div>
<svg style="left:1754px;top:638px" width="28" height="8"><path d="M3 4 H25" stroke="#d6d6d6" stroke-width="1.5"/><path d="M0 4 L4 0.5 V7.5 Z M28 4 L24 0.5 V7.5 Z" fill="#d6d6d6"/></svg>
<div class="a" style="left:1561px;top:701px;width:438px;height:4px;background:#3b3b3b"></div>
<div class="a" style="left:1561px;top:705px;width:438px;height:44px;background:#434343"></div><div class="a" style="left:1561px;top:705px;width:81px;height:44px;background:#535353"></div><div class="t" style="left:1575px;top:718px;font-size:16.3px;font-weight:bold;color:#f2f2f2">Layers</div><div class="t" style="left:1655px;top:718px;font-size:16.3px;font-weight:bold;color:#bdbdbd">Channels</div><div class="t" style="left:1758px;top:718px;font-size:16.3px;font-weight:bold;color:#bdbdbd">Paths</div><div class="a" style="left:1642px;top:705px;width:1px;height:44px;background:#383838"></div><div class="a" style="left:1743px;top:705px;width:1px;height:44px;background:#383838"></div><div class="a" style="left:1816px;top:705px;width:1px;height:44px;background:#383838"></div><div class="a" style="left:1642px;top:748px;width:357px;height:1px;background:#3b3b3b"></div><svg style="left:1977px;top:721px" width="16" height="12"><g fill="#cfcfcf"><rect x="0" y="0" width="16" height="1.4"/><rect x="0" y="2.6" width="16" height="1.4"/><rect x="0" y="5.2" width="16" height="1.4"/><rect x="0" y="7.8" width="16" height="1.4"/><rect x="0" y="10.4" width="16" height="1.4"/></g></svg>
<div class="dd" style="left:1566px;top:762px;width:136px;height:30px"></div>
<svg style="left:1578px;top:768px" width="18" height="18" viewBox="0 0 18 18"><circle cx="7" cy="7" r="5.5" fill="none" stroke="#dcdcdc" stroke-width="1.8"/><path d="M11 11 L16.5 16.5" stroke="#dcdcdc" stroke-width="2.2"/></svg>
<div class="t" style="left:1600px;top:769px;font-size:16.3px;color:#e6e6e6;letter-spacing:0.7px">Kind</div>
<svg style="left:1684px;top:774px" width="12" height="8"><path d="M1 1.5 L6.0 6.5 L11 1.5" stroke="#d0d0d0" stroke-width="1.5" fill="none"/></svg>
<svg style="left:1719px;top:768px" width="20" height="17" viewBox="0 0 20 17"><rect x="1" y="1" width="18" height="15" fill="none" stroke="#d0d0d0" stroke-width="1.6"/><path d="M3.5 13.5 L8 8 L11 11 L13.5 9 L16.5 13.5 Z" fill="#d0d0d0"/></svg>
<svg style="left:1757px;top:767px" width="19" height="19" viewBox="0 0 19 19"><circle cx="9.5" cy="9.5" r="8" fill="none" stroke="#d0d0d0" stroke-width="1.7"/><path d="M15.2 3.8 A8 8 0 0 1 3.8 15.2 Z" fill="#d0d0d0"/></svg>
<svg style="left:1795px;top:768px" width="18" height="18" viewBox="0 0 18 18"><path d="M1.5 5 V1.5 H16.5 V5 M9 1.5 V16.5 M5 16.5 H13" fill="none" stroke="#d0d0d0" stroke-width="1.9"/></svg>
<svg style="left:1831px;top:767px" width="19" height="19" viewBox="0 0 19 19"><rect x="2.5" y="2.5" width="14" height="14" fill="none" stroke="#d0d0d0" stroke-width="1.6"/><g fill="#535353" stroke="#d0d0d0" stroke-width="1.3"><rect x="0.7" y="0.7" width="3.6" height="3.6"/><rect x="14.7" y="0.7" width="3.6" height="3.6"/><rect x="0.7" y="14.7" width="3.6" height="3.6"/><rect x="14.7" y="14.7" width="3.6" height="3.6"/></g></svg>
<svg style="left:1870px;top:767px" width="17" height="20" viewBox="0 0 17 20"><path d="M5 1 H11 L16 6 V17 H5 Z M11 1 V6 H16" fill="none" stroke="#d0d0d0" stroke-width="1.5"/><rect x="0.5" y="10" width="9" height="9" fill="#d0d0d0"/></svg>
<div class="a" style="left:1905.5px;top:763px;width:15px;height:28px;border:1.5px solid #3c3c3c;border-radius:7.5px;background:#494949"></div>
<div class="a" style="left:1906.5px;top:763.5px;width:13px;height:13px;border-radius:50%;background:#e8e8e8"></div>
<div class="a" style="left:1561px;top:797px;width:438px;height:1px;background:#444"></div>
<div class="dd" style="left:1566px;top:806px;width:202px;height:29px"></div>
<div class="t" style="left:1578px;top:812px;font-size:16.3px;color:#e6e6e6;letter-spacing:0.5px">Normal</div>
<svg style="left:1749px;top:817px" width="12" height="8"><path d="M1 1.5 L6.0 6.5 L11 1.5" stroke="#d0d0d0" stroke-width="1.5" fill="none"/></svg>
<div class="t" style="left:1774px;top:812px;font-size:16.3px;color:#c8c8c8;letter-spacing:0.6px">Opacity:</div>
<div class="dd" style="left:1839px;top:806px;width:80px;height:28px"></div><div class="a" style="left:1896px;top:807px;width:1px;height:26px;background:#5c5c5c"></div><div class="t" style="left:1845px;top:812px;font-size:16.3px;color:#e6e6e6;letter-spacing:0.3px">100%</div><svg style="left:1901px;top:817px" width="12" height="8"><path d="M1 1.5 L6.0 6.5 L11 1.5" stroke="#d0d0d0" stroke-width="1.5" fill="none"/></svg>
<div class="a" style="left:1561px;top:840px;width:438px;height:1px;background:#444"></div>
<div class="t" style="left:1569px;top:855px;font-size:16.3px;color:#c8c8c8;letter-spacing:0.8px">Lock:</div>
<svg style="left:1619px;top:855px" width="17" height="17" viewBox="0 0 17 17"><rect x="0.5" y="0.5" width="16" height="16" fill="#8c8c8c"/><g fill="#5e5e5e"><rect x="4.5" y="0.5" width="4" height="4"/><rect x="12.5" y="0.5" width="4" height="4"/><rect x="0.5" y="4.5" width="4" height="4"/><rect x="8.5" y="4.5" width="4" height="4"/><rect x="4.5" y="8.5" width="4" height="4"/><rect x="12.5" y="8.5" width="4" height="4"/><rect x="0.5" y="12.5" width="4" height="4"/><rect x="8.5" y="12.5" width="4" height="4"/></g></svg>
<svg style="left:1653px;top:853px" width="20" height="21" viewBox="0 0 20 21"><path d="M19 0.5 C19.5 1 19 2 18 3.5 L11 12 L8.5 9.5 L17 1.5 C18 0.5 18.5 0.2 19 0.5 Z" fill="#8c8c8c"/><path d="M7.5 10.5 L10 13 C9.5 16.5 7 20 0.5 20.5 C2.5 18.5 2 16.5 3 14.5 C4 12.5 5.5 10.5 7.5 10.5 Z" fill="#8c8c8c"/></svg>
<svg style="left:1684px;top:853px" width="21" height="21" viewBox="0 0 21 21"><path d="M10.5 0 L14 4 L11.7 4 L11.7 9.3 L17 9.3 L17 7 L21 10.5 L17 14 L17 11.7 L11.7 11.7 L11.7 17 L14 17 L10.5 21 L7 17 L9.3 17 L9.3 11.7 L4 11.7 L4 14 L0 10.5 L4 7 L4 9.3 L9.3 9.3 L9.3 4 L7 4 Z" fill="#dadada"/></svg>
<svg style="left:1718px;top:853px" width="23" height="20" viewBox="0 0 23 20"><path d="M2 3.5 H14 L19 8.5 V17 H2 Z" fill="none" stroke="#dadada" stroke-width="1.7"/><g fill="#dadada"><rect x="0" y="0" width="2" height="2"/><rect x="20" y="0" width="2" height="2"/><rect x="0" y="18" width="2" height="2"/><rect x="19" y="18" width="2" height="2"/></g></svg>
<svg style="left:1755px;top:852px" width="17" height="21" viewBox="0 0 17 21"><path d="M4 9 V6 C4 1.5 13 1.5 13 6 V9" fill="none" stroke="#dadada" stroke-width="2.2"/><rect x="1" y="9" width="15" height="11.5" rx="1" fill="#dadada"/><circle cx="8.5" cy="14.5" r="1.8" fill="#535353"/></svg>
<div class="t" style="left:1810px;top:855px;font-size:16.3px;color:#c8c8c8;letter-spacing:0.7px">Fill:</div>
<div class="dd" style="left:1839px;top:849px;width:80px;height:27px"></div><div class="a" style="left:1896px;top:850px;width:1px;height:25px;background:#5c5c5c"></div><div class="t" style="left:1845px;top:855px;font-size:16.3px;color:#e6e6e6;letter-spacing:0.3px">100%</div><svg style="left:1901px;top:859px" width="12" height="8"><path d="M1 1.5 L6.0 6.5 L11 1.5" stroke="#d0d0d0" stroke-width="1.5" fill="none"/></svg>
<div class="a" style="left:1561px;top:884px;width:438px;height:1px;background:#444"></div>
<div class="a" style="left:1561px;top:885px;width:416px;height:181px;background:#535353"></div>
<div class="a" style="left:1608px;top:888px;width:369px;height:63px;background:#6a6a6a"></div>
<div class="a" style="left:1561px;top:951px;width:416px;height:1.5px;background:#474747"></div>
<div class="a" style="left:1561px;top:1014px;width:416px;height:1.5px;background:#474747"></div>
<div class="a" style="left:1607px;top:885px;width:1px;height:180px;background:#474747"></div>
<div class="a" style="left:1977px;top:885px;width:22px;height:180px;background:#575757"></div>
<div class="a" style="left:1982px;top:891px;width:15px;height:78px;background:#6c6c6c;border-radius:7.5px"></div>
<svg style="left:1575px;top:914px" width="20" height="13" viewBox="0 0 20 13"><path d="M0.5 6.5 C3 2 6.5 0.5 10 0.5 C13.5 0.5 17 2 19.5 6.5 C17 11 13.5 12.5 10 12.5 C6.5 12.5 3 11 0.5 6.5 Z" fill="#e0e0e0"/><circle cx="10" cy="6.5" r="4" fill="#535353"/><circle cx="11" cy="5.2" r="0.8" fill="#9a9a9a"/></svg>
<svg style="left:1575px;top:978px" width="20" height="13" viewBox="0 0 20 13"><path d="M0.5 6.5 C3 2 6.5 0.5 10 0.5 C13.5 0.5 17 2 19.5 6.5 C17 11 13.5 12.5 10 12.5 C6.5 12.5 3 11 0.5 6.5 Z" fill="#e0e0e0"/><circle cx="10" cy="6.5" r="4" fill="#535353"/><circle cx="11" cy="5.2" r="0.8" fill="#9a9a9a"/></svg>
<svg style="left:1575px;top:1041px" width="20" height="13" viewBox="0 0 20 13"><path d="M0.5 6.5 C3 2 6.5 0.5 10 0.5 C13.5 0.5 17 2 19.5 6.5 C17 11 13.5 12.5 10 12.5 C6.5 12.5 3 11 0.5 6.5 Z" fill="#e0e0e0"/><circle cx="10" cy="6.5" r="4" fill="#535353"/><circle cx="11" cy="5.2" r="0.8" fill="#9a9a9a"/></svg>
<svg style="left:1628px;top:909px" width="21" height="21" viewBox="0 0 21 21"><path d="M1.2 6 V1.2 H19.8 V6 M10.5 1.2 V19.5 M4.5 19.8 H16.5" fill="none" stroke="#e6e6e6" stroke-width="2.3"/></svg>
<svg style="left:1628px;top:973px" width="21" height="21" viewBox="0 0 21 21"><path d="M1.2 6 V1.2 H19.8 V6 M10.5 1.2 V19.5 M4.5 19.8 H16.5" fill="none" stroke="#e6e6e6" stroke-width="2.3"/></svg>
<svg style="left:1628px;top:1036px" width="21" height="21" viewBox="0 0 21 21"><path d="M1.2 6 V1.2 H19.8 V6 M10.5 1.2 V19.5 M4.5 19.8 H16.5" fill="none" stroke="#e6e6e6" stroke-width="2.3"/></svg>
<svg style="left:1610px;top:890px" width="57" height="58" viewBox="0 0 57 58"><path d="M1 21 V1.5 H20 M37 1.5 H56 V21 M56 37 V56.5 H37 M20 56.5 H1 V37" fill="none" stroke="#f2f2f2" stroke-width="1.8"/></svg>
<div class="t" style="left:1676px;top:911px;font-size:16.3px;color:#f0f0f0;letter-spacing:0.25px">Kerning is a  space</div>
<div class="t" style="left:1676px;top:975px;font-size:16.3px;color:#f0f0f0;letter-spacing:0.25px">Tracking is spacing</div>
<div class="t" style="left:1676px;top:1038px;font-size:16.3px;color:#f0f0f0;letter-spacing:0.25px">Tracking is spacing</div>
<div class="a" style="left:1561px;top:1065px;width:438px;height:1px;background:#474747"></div>
<svg style="left:1686px;top:1076px" width="24" height="14" viewBox="0 0 24 14"><g fill="none" stroke="#9a9a9a" stroke-width="2"><rect x="1" y="2" width="12" height="10" rx="5"/><rect x="11" y="2" width="12" height="10" rx="5"/></g></svg>
<div class="t" style="left:1730px;top:1072px;font-size:21px;font-style:italic;color:#d6d6d6">fx</div>
<svg style="left:1747px;top:1092px" width="7" height="5"><path d="M0 0 H7 L3.5 4 Z" fill="#e0e0e0"/></svg>
<svg style="left:1772px;top:1075px" width="20" height="17" viewBox="0 0 20 17"><rect x="0" y="0" width="20" height="17" rx="1.5" fill="#e0e0e0"/><circle cx="10" cy="8.5" r="4.2" fill="#535353"/></svg>
<svg style="left:1814px;top:1074px" width="19" height="19" viewBox="0 0 19 19"><circle cx="9.5" cy="9.5" r="8" fill="none" stroke="#e0e0e0" stroke-width="1.7"/><path d="M15.2 3.8 A8 8 0 0 1 3.8 15.2 Z" fill="#e0e0e0"/></svg>
<svg style="left:1829px;top:1092px" width="7" height="5"><path d="M0 0 H7 L3.5 4 Z" fill="#e0e0e0"/></svg>
<svg style="left:1855px;top:1075px" width="22" height="18" viewBox="0 0 22 18"><path d="M0 1 H8 L10 3 H22 V18 H0 Z" fill="#e0e0e0"/><rect x="0" y="4" width="22" height="1" fill="#535353"/></svg>
<svg style="left:1897px;top:1074px" width="20" height="20" viewBox="0 0 20 20"><rect x="1" y="1" width="18" height="18" fill="none" stroke="#e0e0e0" stroke-width="1.7"/><path d="M10 5 V15 M5 10 H15" stroke="#e0e0e0" stroke-width="1.9"/></svg>
<svg style="left:1939px;top:1073px" width="19" height="22" viewBox="0 0 19 22"><path d="M6 3 V1 H13 V3" fill="none" stroke="#e0e0e0" stroke-width="1.6"/><rect x="0" y="3" width="19" height="2" fill="#e0e0e0"/><path d="M2.5 6 H16.5 L15.5 21 H3.5 Z" fill="none" stroke="#e0e0e0" stroke-width="1.7"/><path d="M7 8 V19 M9.5 8 V19 M12 8 V19" stroke="#e0e0e0" stroke-width="1.4"/></svg>
<div class="t" style="left:78px;top:1082px;font-size:16.3px;color:#dedede;letter-spacing:0.9px">33.33%</div>
<div class="t" style="left:177px;top:1082px;font-size:16.5px;color:#dedede;letter-spacing:0.4px">2550 px x 3300 px (300 ppi)</div>
<svg style="left:422px;top:1085px" width="7" height="13"><path d="M1 1 L6 6.5 L1 12" stroke="#d8d8d8" stroke-width="1.4" fill="none"/></svg>
<!-- /RIGHT PANELS -->
</body></html>
